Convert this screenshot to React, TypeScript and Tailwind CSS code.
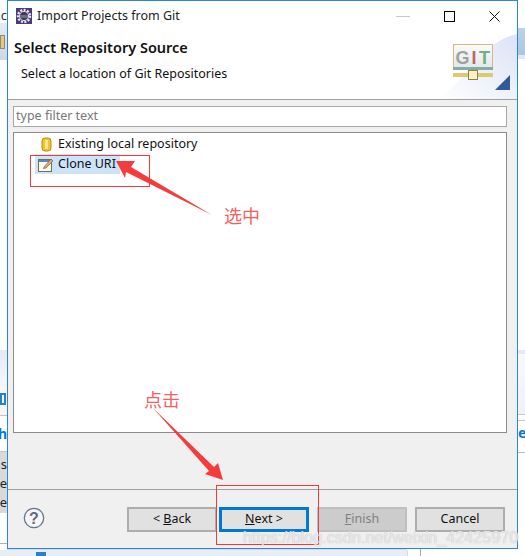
const uiFont = "font-['Noto_Sans','Open_Sans',sans-serif]";

const LeftStrip = () => (
  <div className="w-[7px] h-[556px] shrink-0 overflow-hidden flex flex-col bg-white text-[13px] leading-[16px]">
    <div className="h-[23px] flex items-start pt-[7px] justify-end text-[#333] whitespace-nowrap">nc</div>
    <div className="h-[37px] bg-gradient-to-b from-[#e4eaf3] to-[#cfd8e6] flex items-center">
      <div className="w-[5px] h-[14px] bg-[#e8c878] border border-[#8a8a8a]" />
    </div>
    <div className="h-[290px]" />
    <div className="h-[32px] bg-gradient-to-b from-[#e6e8f8] to-[#f4f6fb]" />
    <div className="h-[33px] bg-[#f3f6fb] flex items-center">
      <div className="w-[6px] h-[12px] border-2 border-[#2a7fc8]" />
    </div>
    <div className="h-[37px] border-y border-[#c4c4c4] text-[#0a78d2] font-bold text-[14px] flex items-center justify-end whitespace-nowrap">h</div>
    <div className="h-[61px] bg-[#d9d9d9] flex flex-col items-end justify-center gap-[3px] text-[#222] whitespace-nowrap">
      <span>s</span>
      <span>je</span>
      <span>e</span>
    </div>
    <div className="h-[30px]" />
    <div className="h-[1px] bg-[#b0b0b0]" />
    <div className="h-[6px]" />
    <div className="flex-1 bg-[#e8eef5]" />
  </div>
);

const RightStrip = () => (
  <div className="w-[7px] h-[556px] shrink-0 overflow-hidden flex flex-col bg-white">
    <div className="h-[28px] bg-white" />
    <div className="h-[27px] bg-gradient-to-b from-[#bcd3e8] to-[#a9c6e2]" />
    <div className="h-[4px] bg-[#e4e6f6]" />
    <div className="h-[291px]" />
    <div className="h-[4px] bg-[#e6e8f8]" />
    <div className="h-[60px] bg-gradient-to-b from-[#f6f8fc] to-[#eef2f9]" />
    <div className="h-[7px] border-y border-[#c8c8c8]" />
    <div className="h-[32px] border-b border-[#b8b8c8] text-[#0a78d2] font-bold text-[14px] leading-[16px] pt-[4px] whitespace-nowrap">e</div>
  </div>
);

const AppIcon = () => (
  <svg width="16" height="16" viewBox="0 0 16 16" className="shrink-0">
    <rect width="16" height="16" fill="#4b3a78" />
    <circle cx="8" cy="8" r="6" fill="none" stroke="#e8e8e8" strokeWidth="2.4" strokeDasharray="2 1.4" />
    <circle cx="8" cy="8" r="4.6" fill="#3c3a58" stroke="#d8d8d8" strokeWidth="1" />
    <rect x="4" y="7" width="8" height="3" fill="#6a6a90" />
  </svg>
);

const GitBanner = () => (
  <svg width="85" height="68" viewBox="0 0 85 68" className="absolute right-0 top-0">
    <defs>
      <linearGradient id="swoop" x1="0" y1="1" x2="1" y2="0">
        <stop offset="0%" stopColor="#ffffff" />
        <stop offset="100%" stopColor="#dbe3f6" />
      </linearGradient>
      <linearGradient id="screen" x1="0" y1="0" x2="0" y2="1">
        <stop offset="0%" stopColor="#f8fbfa" />
        <stop offset="100%" stopColor="#dfe9e8" />
      </linearGradient>
    </defs>
    <path d="M5 68 C35 50 50 10 85 3 L85 68 Z" fill="url(#swoop)" />
    <rect x="21.5" y="13.5" width="39" height="25" fill="url(#screen)" stroke="#e0b67e" />
    <rect x="21" y="36" width="40" height="3" fill="#8aa8a8" />
    <text x="23.5" y="33" fontSize="18" fontWeight="700" fontFamily="Liberation Sans, sans-serif" fill="#a0a0a0">G</text>
    <text x="39.5" y="33" fontSize="18" fontWeight="700" fontFamily="Liberation Sans, sans-serif" fill="#c46464">I</text>
    <text x="47" y="33" fontSize="18" fontWeight="700" fontFamily="Liberation Sans, sans-serif" fill="#74ac84">T</text>
    <rect x="21" y="42" width="40" height="4" fill="#dccb6e" />
    <rect x="36.5" y="39.5" width="9" height="9" fill="#fdf2c8" stroke="#94803c" />
    <path d="M78 44 L78 59 L63 59 Z" fill="#2e5a9c" />
  </svg>
);

const CylinderIcon = () => (
  <svg width="11" height="15" viewBox="0 0 11 15" className="shrink-0">
    <rect x="1" y="1" width="9" height="13" rx="3" fill="#f2c230" stroke="#b88a18" />
    <rect x="4" y="3" width="3" height="9" fill="#fbe88c" />
  </svg>
);

const EditIcon = () => (
  <svg width="16" height="16" viewBox="0 0 16 16" className="shrink-0">
    <rect x="0.5" y="3.5" width="13" height="12" fill="#fdfdf6" stroke="#76704a" />
    <rect x="1" y="4" width="12" height="2" fill="#5a86b8" />
    <path d="M6 11 L13 3 L15 5 L8 12 L5.5 12.5 Z" fill="#e0a878" stroke="#8a5a3c" strokeWidth="0.7" />
  </svg>
);

const HelpIcon = () => (
  <svg width="22" height="22" viewBox="0 0 22 22">
    <circle cx="11" cy="11" r="9.7" fill="#f6f6f8" stroke="#69758f" strokeWidth="1.3" />
    <text x="11" y="16.5" textAnchor="middle" fontSize="16" fontWeight="700" fontFamily="Liberation Sans, sans-serif" fill="#5f6a86">?</text>
  </svg>
);

const WizardButton = ({
  label,
  mnemonic,
  rest,
  prefix,
  variant = "normal",
}: {
  label?: string;
  mnemonic?: string;
  rest?: string;
  prefix?: string;
  variant?: "normal" | "focus" | "disabled";
}) => {
  const tone =
    variant === "focus"
      ? "border-[3px] border-[#0078d7] bg-[#e1e1e1] text-[#111]"
      : variant === "disabled"
        ? "border-2 border-[#bfbfbf] bg-[#cccccc] text-[#808080]"
        : "border-2 border-[#adadad] bg-[#e1e1e1] text-[#111]";
  return (
    <div className={`w-[90px] h-[25px] flex items-center justify-center text-[12.5px] whitespace-pre ${tone}`}>
      {label ?? (
        <>
          {prefix}
          <span className="underline">{mnemonic}</span>
          {rest}
        </>
      )}
    </div>
  );
};

const Annotations = () => (
  <>
    <div className="absolute left-[30px] top-[155px] w-[120px] h-[32px] border border-[#f03a3a]" />
    <div className="absolute left-[216px] top-[485px] w-[103px] h-[60px] border border-[#f03a3a]" />
    <svg width="525" height="556" viewBox="0 0 525 556" className="absolute inset-0 pointer-events-none">
      <path d="M116 161 L135 161 L131 167 L212 215 L126 172 L125 178 Z" fill="#f53c3c" />
      <path d="M153 408 L214 467 L218 463 L223 480 L205 474 L209 471 Z" fill="#f53c3c" />
    </svg>
    <span className="absolute left-[224px] top-[203px] text-[18px] leading-[24px] text-[#f46060] font-['Noto_Sans_CJK_SC',serif]">
      选中
    </span>
    <span className="absolute left-[144px] top-[387px] text-[18px] leading-[24px] text-[#f46060] font-['Noto_Sans_CJK_SC',serif]">
      点击
    </span>
    <span className="absolute left-[243px] top-[527px] text-[16.2px] leading-[20px] text-white/70 whitespace-nowrap font-['Liberation_Sans',sans-serif] [text-shadow:0_0_1px_#aaa]">
      https://blog.csdn.net/weixin_42425970
    </span>
  </>
);

export default function App() {
  return (
    <div className={`relative w-[525px] h-[556px] overflow-hidden bg-white flex items-start ${uiFont}`}>
      <LeftStrip />

      <div className="w-[511px] shrink-0 flex flex-col">
        <div className="h-[549px] border border-[#2b86d8] bg-[#f0f0f0] flex flex-col">
          {/* Title bar */}
          <div className="h-[30px] bg-white flex items-center pl-[8px] text-[12.5px] text-[#222]">
            <AppIcon />
            <span className="ml-[5px]">Import Projects from Git</span>
            <div className="ml-auto w-[14px] h-[1px] bg-[#c8c8c8] mr-[34px]" />
            <div className="w-[11px] h-[11px] border border-black mr-[34px]" />
            <svg width="11" height="11" viewBox="0 0 11 11" className="mr-[17px]">
              <path d="M0.5 0.5 L10.5 10.5 M10.5 0.5 L0.5 10.5" stroke="#111" strokeWidth="1" />
            </svg>
          </div>

          {/* Wizard header */}
          <div className="relative h-[69px] bg-white border-b border-[#a0a0a0] px-[6px] text-[#111]">
            <div className="pt-[6px] text-[14.5px] leading-[20px] font-semibold">Select Repository Source</div>
            <div className="pl-[7px] pt-[8px] text-[12.5px] leading-[18px]">Select a location of Git Repositories</div>
            <GitBanner />
          </div>

          {/* Filter and tree */}
          <div className="flex-1 flex flex-col px-[5px] pt-[6px]">
            <div className="w-[494px] h-[21px] border border-[#a8a8a8] bg-white flex items-center pl-[2px] text-[12.5px] text-[#777]">
              type filter text
            </div>
            <div className="mt-[5px] w-[494px] h-[301px] border border-[#8a8a90] bg-white flex flex-col pt-[1px] text-[12.5px] text-[#111]">
              <div className="h-[20px] flex items-center pl-[27px]">
                <CylinderIcon />
                <span className="ml-[6px]">Existing local repository</span>
              </div>
              <div className="ml-[21px] w-[85px] h-[20px] bg-[#cbe4fa] flex items-center pl-[3px] whitespace-nowrap">
                <EditIcon />
                <span className="ml-[4px]">Clone URI</span>
              </div>
            </div>
          </div>

          {/* Button bar */}
          <div className="h-[59px] border-t border-[#a0a0a0] flex items-start pt-[17px] pl-[119px] relative">
            <div className="absolute left-[15px] top-[17px]">
              <HelpIcon />
            </div>
            <WizardButton prefix="< " mnemonic="B" rest="ack" />
            <div className="w-[2px]" />
            <WizardButton prefix="" mnemonic="N" rest="ext >" variant="focus" />
            <div className="w-[8px]" />
            <WizardButton mnemonic="F" rest="inish" variant="disabled" />
            <div className="w-[8px]" />
            <WizardButton label="Cancel" />
          </div>
        </div>

        {/* Window behind, peeking out under the dialog */}
        <div className="h-[7px] flex">
          <div className="w-[401px] flex flex-col">
            <div className="h-[1px]" />
            <div className="flex-1 bg-[#e8eef5] border-t border-r border-[#d4dae6] rounded-tr-[3px] pl-[29px]">
              <div className="w-[10px] h-[4px] mt-[2px] bg-[#2a7fc8]" />
            </div>
          </div>
          <div className="w-[12px]" />
          <div className="w-[1px] bg-[#a8a8a8]" />
        </div>
      </div>

      <RightStrip />

      <Annotations />
    </div>
  );
}
